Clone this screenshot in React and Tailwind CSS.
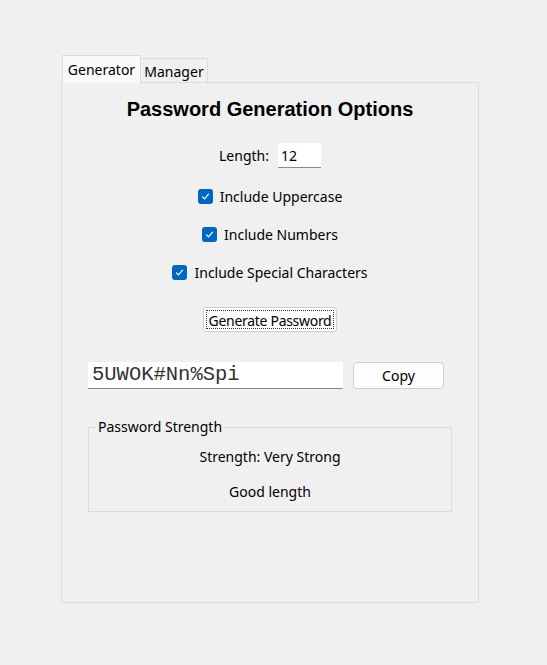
import React, { useState } from 'react'

const Check = ({ checked, onChange, label }) => (
  <label className="flex items-center h-[20px] cursor-pointer select-none">
    <span
      onClick={onChange}
      className={`w-[15px] h-[15px] rounded-[3px] flex items-center justify-center ${checked ? 'bg-[#0067c0]' : 'bg-white border border-[#888]'}`}
    >
      {checked && (
        <svg width="11" height="11" viewBox="0 0 11 11" fill="none">
          <path d="M2.5 5.8l2 2 4-4.6" stroke="white" strokeWidth="1.2" strokeLinecap="round" strokeLinejoin="round" />
        </svg>
      )}
    </span>
    <span className="ml-[7px]">{label}</span>
  </label>
)

const App = () => {
  const [tab, setTab] = useState('generator')
  const [length, setLength] = useState('12')
  const [upper, setUpper] = useState(true)
  const [numbers, setNumbers] = useState(true)
  const [special, setSpecial] = useState(true)
  const [password] = useState('5UWOK#Nn%Spi')

  return (
    <div className="w-[547px] h-[665px] bg-[#f0f0f0] pl-[61px] pt-[55px] text-[14px] text-black font-['Noto_Sans',sans-serif]">
      {/* Tabs */}
      <div className="flex items-end h-[27px]">
        <button
          onClick={() => setTab('generator')}
          className="h-[28px] w-[79px] ml-[1px] bg-[#f9f9f9] border border-b-0 border-[#dcdcdc] text-[14px] leading-[26px] relative top-[1px] z-10"
        >
          Generator
        </button>
        <button
          onClick={() => setTab('manager')}
          className="h-[24px] w-[67px] bg-[#f0f0f0] border border-b-0 border-l-0 border-[#dcdcdc] text-[14px] leading-[26px]"
        >
          Manager
        </button>
      </div>

      {/* Panel */}
      <div className="w-[418px] h-[521px] border border-[#dcdcdc] bg-[#f0f0f0] flex flex-col items-center">
        <h1 className="mt-[14px] h-[24px] leading-[24px] text-[20px] font-bold font-['Liberation_Sans',sans-serif]">
          Password Generation Options
        </h1>

        <div className="mt-[22px] flex items-center h-[25px]">
          <span>Length:</span>
          <input
            value={length}
            onChange={(e) => setLength(e.target.value)}
            className="ml-[9px] w-[43px] h-[25px] bg-white border-b border-[#8a8a8a] px-[3px] outline-none"
          />
        </div>

        <div className="mt-[18px]">
          <Check checked={upper} onChange={() => setUpper(!upper)} label="Include Uppercase" />
        </div>
        <div className="mt-[18px]">
          <Check checked={numbers} onChange={() => setNumbers(!numbers)} label="Include Numbers" />
        </div>
        <div className="mt-[18px]">
          <Check checked={special} onChange={() => setSpecial(!special)} label="Include Special Characters" />
        </div>

        <button className="mt-[25px] h-[25px] w-[134px] bg-[#fdfdfd] border border-[#d0d0d0] rounded-[3px] p-[2px] whitespace-nowrap">
          <span className="block h-full border border-dotted border-[#333] leading-[19px] tracking-[-0.3px]">Generate Password</span>
        </button>

        {/* Password output */}
        <div className="mt-[30px] self-start ml-[26px] flex items-center">
          <input
            readOnly
            value={password}
            className="w-[255px] h-[27px] bg-white border-b border-[#8a8a8a] px-[4px] outline-none text-[20.5px] text-[#333] font-['Liberation_Mono',monospace]"
          />
          <button className="ml-[10px] w-[91px] h-[27px] bg-[#fdfdfd] border border-[#d0d0d0] rounded-[4px]">
            Copy
          </button>
        </div>

        {/* Strength frame */}
        <fieldset className="mt-[29px] self-start ml-[26px] w-[364px] h-[94px] border border-[#dcdcdc] text-center">
          <legend className="ml-[7px] px-[2px] leading-[18px] text-left">Password Strength</legend>
          <div className="mt-[11px] h-[20px] leading-[20px]">Strength: Very Strong</div>
          <div className="mt-[15px] h-[20px] leading-[20px]">Good length</div>
        </fieldset>
      </div>
    </div>
  )
}

export default App
